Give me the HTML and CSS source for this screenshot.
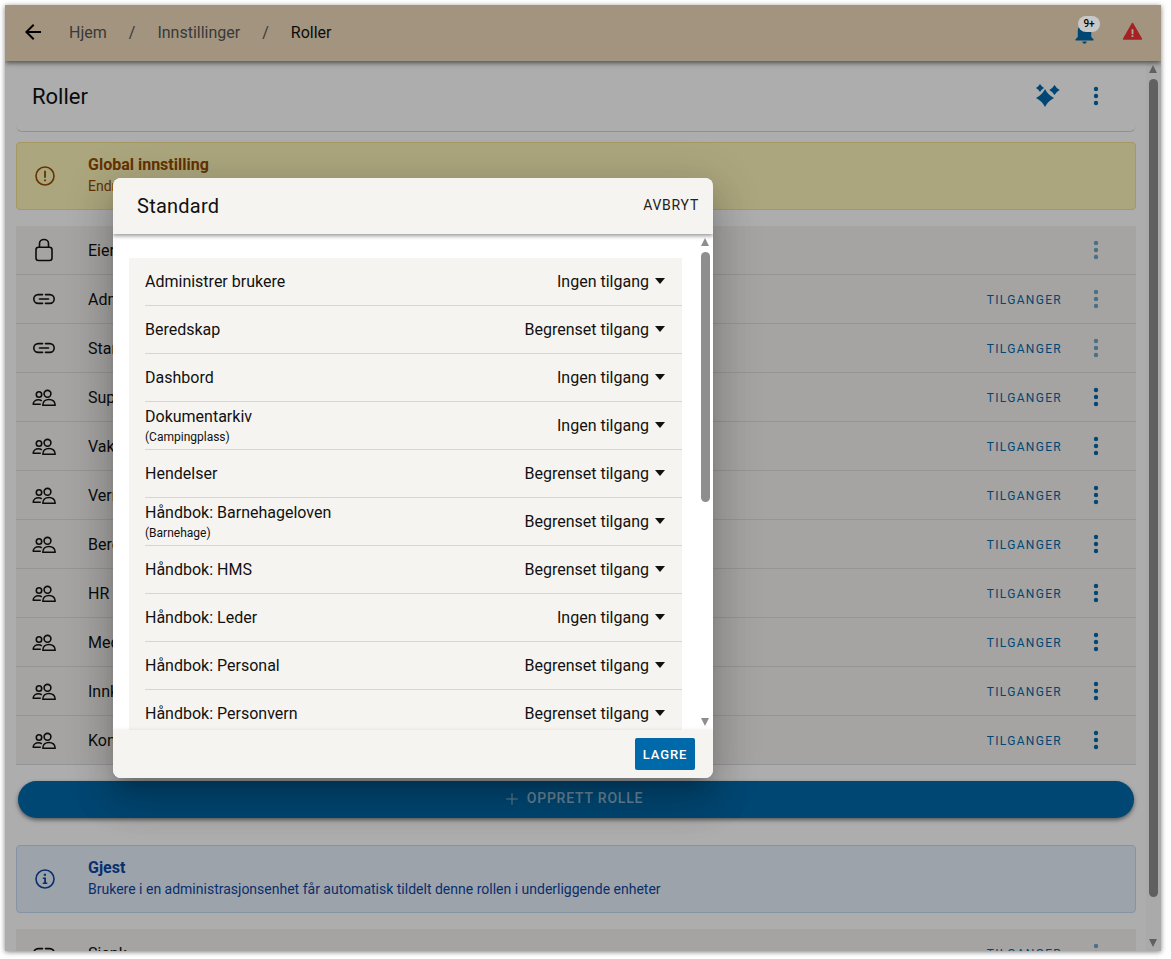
FILE: index.html
```html
<!DOCTYPE html>
<html lang="no">
<head>
<meta charset="utf-8">
<title>Roller</title>
<link rel="stylesheet" href="styles.css">
</head>
<body>
<svg class="defs" width="0" height="0" aria-hidden="true">
  <symbol id="i-dots" viewBox="0 0 24 24"><circle cx="12" cy="5" r="2.2"/><circle cx="12" cy="12" r="2.2"/><circle cx="12" cy="19" r="2.2"/></symbol>
  <symbol id="i-link" viewBox="0 0 24 24"><path fill="none" stroke="currentColor" stroke-width="1.6" stroke-linecap="round" d="M10.500 7.600H6.200a4.400 4.400 0 0 0 0 8.800h4.300M13.500 7.600h4.300a4.400 4.400 0 0 1 0 8.800h-4.300M7.500 12h9"/></symbol>
  <symbol id="i-group" viewBox="0 0 24 24"><g fill="none" stroke="currentColor" stroke-width="1.6" stroke-linejoin="round"><circle cx="15.500" cy="8.800" r="3.400"/><circle cx="7" cy="9.500" r="2.700"/><path d="M10.800 20.300h12.400c0-3.800-2.800-5.800-6.200-5.800s-6.200 2-6.200 5.800z"/><path d="M8.800 19.300H1.200c0-2.800 2.400-4.500 5.300-4.500 1.300 0 2.400.4 3.300 1"/></g></symbol>
  <symbol id="i-lock" viewBox="0 0 24 24"><path fill="none" stroke="currentColor" stroke-width="1.600" d="M6.500 9.300h11a2.500 2.500 0 0 1 2.500 2.500V20a2.500 2.500 0 0 1-2.500 2.500h-11A2.500 2.500 0 0 1 4 20v-8.200a2.500 2.500 0 0 1 2.500-2.500zM7.500 9.300V5.500a4.500 4 0 0 1 9 0v3.800"/></symbol>
  <symbol id="i-caret" viewBox="0 0 10 6"><path d="M0 0h10L5 6z"/></symbol>
</svg>

<div class="window">
  <header class="topbar">
    <svg class="back" viewBox="0 0 24 24"><path d="M20 11H7.830l5.590-5.590L12 4l-8 8 8 8 1.410-1.410L7.830 13H20z"/></svg>
    <nav class="crumbs">
      <span class="crumb">Hjem</span><span class="sep">/</span>
      <span class="crumb">Innstillinger</span><span class="sep">/</span>
      <span class="crumb current">Roller</span>
    </nav>
    <div class="top-actions">
      <div class="bell">
        <svg viewBox="0 0 24 24"><path d="M12 22c1.100 0 2-.9 2-2h-4c0 1.100.9 2 2 2zm6-6v-5c0-3.070-1.630-5.640-4.500-6.320V4c0-.83-.67-1.500-1.500-1.500s-1.500.67-1.500 1.500v.68C7.640 5.360 6 7.920 6 11v5l-2 2v1h16v-1l-2-2z"/></svg>
        <span class="badge">9+</span>
      </div>
      <svg class="warn" viewBox="0 0 24 24"><path class="warn-bg" d="M2 20.500h20L12 3z"/><path class="warn-fg" d="M11 9.500h2v5.500h-2zM11 16.300h2v2h-2z"/></svg>
    </div>
  </header>

  <div class="below">
    <main class="page">
      <section class="title-card">
        <h1>Roller</h1>
        <div class="title-actions">
          <svg class="sparkle" viewBox="0 0 24 24"><path d="M9 5Q12 11 18 14 12 17 9 23 6 17 0 14 6 11 9 5zM18.500 1Q20.300 4.200 23.700 6 20.300 7.800 18.500 11 16.700 7.800 13.300 6 16.700 4.200 18.500 1zM4 0Q5.400 2.600 8 4 5.400 5.400 4 8 2.600 5.400 0 4 2.600 2.600 4 0z"/></svg>
          <svg class="dots"><use href="#i-dots"/></svg>
        </div>
      </section>

      <section class="alert warn-alert">
        <svg class="alert-icon" viewBox="0 0 24 24"><circle cx="12" cy="12" r="9" fill="none" stroke="currentColor" stroke-width="1.600"/><path d="M11.100 6.800h1.800v7h-1.800zM11.100 15.400h1.800v1.800h-1.800z"/></svg>
        <div class="alert-text">
          <strong>Global innstilling</strong>
          <span>Endringer i denne rollen gjelder for alle enheter</span>
        </div>
      </section>

      <section class="list">
        <div class="row"><svg class="row-icon"><use href="#i-lock"/></svg><span class="row-name">Eier</span><svg class="dots muted"><use href="#i-dots"/></svg></div>
        <div class="row"><svg class="row-icon"><use href="#i-link"/></svg><span class="row-name">Administrator</span><span class="access">TILGANGER</span><svg class="dots muted"><use href="#i-dots"/></svg></div>
        <div class="row"><svg class="row-icon"><use href="#i-link"/></svg><span class="row-name">Standard</span><span class="access">TILGANGER</span><svg class="dots muted"><use href="#i-dots"/></svg></div>
        <div class="row"><svg class="row-icon"><use href="#i-group"/></svg><span class="row-name">Superbruker</span><span class="access">TILGANGER</span><svg class="dots"><use href="#i-dots"/></svg></div>
        <div class="row"><svg class="row-icon"><use href="#i-group"/></svg><span class="row-name">Vakt</span><span class="access">TILGANGER</span><svg class="dots"><use href="#i-dots"/></svg></div>
        <div class="row"><svg class="row-icon"><use href="#i-group"/></svg><span class="row-name">Verneombud</span><span class="access">TILGANGER</span><svg class="dots"><use href="#i-dots"/></svg></div>
        <div class="row"><svg class="row-icon"><use href="#i-group"/></svg><span class="row-name">Beredskap</span><span class="access">TILGANGER</span><svg class="dots"><use href="#i-dots"/></svg></div>
        <div class="row"><svg class="row-icon"><use href="#i-group"/></svg><span class="row-name">HR</span><span class="access">TILGANGER</span><svg class="dots"><use href="#i-dots"/></svg></div>
        <div class="row"><svg class="row-icon"><use href="#i-group"/></svg><span class="row-name">Medarbeider</span><span class="access">TILGANGER</span><svg class="dots"><use href="#i-dots"/></svg></div>
        <div class="row"><svg class="row-icon"><use href="#i-group"/></svg><span class="row-name">Innkjøp</span><span class="access">TILGANGER</span><svg class="dots"><use href="#i-dots"/></svg></div>
        <div class="row"><svg class="row-icon"><use href="#i-group"/></svg><span class="row-name">Kontakt</span><span class="access">TILGANGER</span><svg class="dots"><use href="#i-dots"/></svg></div>
      </section>

      <button class="create"><svg viewBox="0 0 24 24"><path d="M19 12.600h-6.400V19h-1.200v-6.400H5v-1.200h6.400V5h1.200v6.400H19z"/></svg>OPPRETT ROLLE</button>

      <section class="alert info-alert">
        <svg class="alert-icon" viewBox="0 0 24 24"><circle cx="12" cy="12" r="9" fill="none" stroke="currentColor" stroke-width="1.600"/><path d="M10.800 6.800h2.200v2h-2.200zM9.800 10.400h3.200v5.200h1.300v1.500H9.800v-1.500h1.400v-3.700H9.800z"/></svg>
        <div class="alert-text">
          <strong>Gjest</strong>
          <span>Brukere i en administrasjonsenhet får automatisk tildelt denne rollen i underliggende enheter</span>
        </div>
      </section>

      <section class="list">
        <div class="row"><svg class="row-icon"><use href="#i-link"/></svg><span class="row-name">Sjenk</span><span class="access">TILGANGER</span><svg class="dots muted"><use href="#i-dots"/></svg></div>
      </section>
    </main>
    <div class="page-scrollbar">
      <span class="arrow up"></span>
      <span class="track"><span class="thumb"></span></span>
      <span class="arrow down"></span>
    </div>
  </div>
  <div class="scrim"></div>
</div>

<div class="dialog">
  <header class="dialog-head">
    <h2>Standard</h2>
    <button class="cancel">AVBRYT</button>
  </header>
  <div class="dialog-body">
    <div class="dialog-scroll">
      <ul class="perm-list">
        <li class="perm"><span class="perm-name">Administrer brukere</span><span class="perm-value">Ingen tilgang<svg class="caret"><use href="#i-caret"/></svg></span></li>
        <li class="perm"><span class="perm-name">Beredskap</span><span class="perm-value">Begrenset tilgang<svg class="caret"><use href="#i-caret"/></svg></span></li>
        <li class="perm"><span class="perm-name">Dashbord</span><span class="perm-value">Ingen tilgang<svg class="caret"><use href="#i-caret"/></svg></span></li>
        <li class="perm"><span class="perm-name">Dokumentarkiv<small>(Campingplass)</small></span><span class="perm-value">Ingen tilgang<svg class="caret"><use href="#i-caret"/></svg></span></li>
        <li class="perm"><span class="perm-name">Hendelser</span><span class="perm-value">Begrenset tilgang<svg class="caret"><use href="#i-caret"/></svg></span></li>
        <li class="perm"><span class="perm-name">Håndbok: Barnehageloven<small>(Barnehage)</small></span><span class="perm-value">Begrenset tilgang<svg class="caret"><use href="#i-caret"/></svg></span></li>
        <li class="perm"><span class="perm-name">Håndbok: HMS</span><span class="perm-value">Begrenset tilgang<svg class="caret"><use href="#i-caret"/></svg></span></li>
        <li class="perm"><span class="perm-name">Håndbok: Leder</span><span class="perm-value">Ingen tilgang<svg class="caret"><use href="#i-caret"/></svg></span></li>
        <li class="perm"><span class="perm-name">Håndbok: Personal</span><span class="perm-value">Begrenset tilgang<svg class="caret"><use href="#i-caret"/></svg></span></li>
        <li class="perm"><span class="perm-name">Håndbok: Personvern</span><span class="perm-value">Begrenset tilgang<svg class="caret"><use href="#i-caret"/></svg></span></li>
      </ul>
    </div>
    <div class="dialog-scrollbar">
      <span class="arrow up"></span>
      <span class="track"><span class="thumb"></span></span>
      <span class="arrow down"></span>
    </div>
  </div>
  <footer class="dialog-foot"><button class="save">LAGRE</button></footer>
</div>
</body>
</html>
```

FILE: styles.css
```css
* { box-sizing: border-box; }
html, body { margin: 0; height: 100%; overflow: hidden; }
body { background: #fff; font-family: Roboto, "Liberation Sans", sans-serif; color: #111; padding: 5px 10px 8px 5px; }
.defs { position: absolute; }

.window { position: relative; height: 946px; background: #fff; display: flex; flex-direction: column; overflow: hidden; }
body::before { content: ""; position: absolute; left: 5px; top: 5px; width: 1156px; height: 946px; box-shadow: 0 1px 5px 0 rgba(0,0,0,.5); }

.topbar { flex: 0 0 56px; background: #f0dbbc; display: flex; align-items: center; padding: 0 18px 2px 16px; position: relative; box-shadow: 0 2px 5px 0 rgba(0,0,0,.55); }
.back { width: 24px; height: 24px; fill: #000; }
.crumbs { display: flex; align-items: center; margin-left: 24px; font-size: 16px; }
.crumb { color: #555; }
.crumb.current { color: #111; }
.sep { color: #555; margin: 0 22px; }
.top-actions { margin-left: auto; display: flex; align-items: center; gap: 24px; }
.bell { position: relative; width: 27px; height: 27px; margin-top: 1px; }
.bell svg { display: block; width: 27px; height: 27px; fill: #0069aa; }
.badge { position: absolute; z-index: 6; left: 7px; top: -3px; width: 22px; height: 16px; border-radius: 8px; background: #c8c8c8; color: #000; font-size: 10px; font-weight: 500; line-height: 15px; text-align: center; }
.warn { width: 21px; height: 21px; margin-top: -1px; }
.warn-bg { fill: #f53232; stroke: #f53232; stroke-width: 2; stroke-linejoin: round; }
.warn-fg { fill: #fff; }

.below { flex: 1; min-height: 0; display: flex; }
.page { flex: 1; min-width: 0; padding: 0 10px 0 11px; overflow: hidden; }

.title-card { height: 71px; display: flex; align-items: center; justify-content: space-between; padding: 0 16px; border-bottom: 1px solid #d4d4d4; border-radius: 0 0 6px 6px; margin-bottom: 10px; }
.title-card h1 { font-size: 22px; font-weight: 400; margin: 1px 0 0; color: #111; }
.title-actions { display: flex; align-items: center; gap: 24px; margin-right: 12px; }
.sparkle { width: 24px; height: 24px; fill: #0069aa; }
.dots { width: 24px; height: 24px; fill: #0069aa; flex: none; }
.dots.muted { opacity: .55; }

.alert { display: flex; align-items: center; height: 68px; border-radius: 4px; padding: 0 0 0 16px; margin-bottom: 16px; font-size: 14px; }
.alert-icon { width: 24px; height: 24px; flex: none; fill: currentColor; }
.alert-text { margin: 0 0 2px 31px; display: flex; flex-direction: column; gap: 1px; line-height: 20px; }
.alert-text strong { font-size: 16px; font-weight: 700; line-height: 20px; }
.warn-alert { background: #fdf5b8; border: 1px solid #f3e08f; color: #964b00; }
.info-alert { background: #e7f1fc; border: 1px solid #c3daf2; color: #0d47a1; margin-top: 27px; }

.list { background: #f4f2ef; }
.row { height: 49px; display: flex; align-items: center; padding: 0 28px 0 16px; border-bottom: 1px solid #dcdcdc; font-size: 16px; }
.row-icon { width: 24px; height: 24px; fill: #111; color: #111; flex: none; }
.row-name { margin-left: 32px; color: #111; }
.access { margin-left: auto; margin-right: 22px; padding-top: 2px; color: #0069aa; font-size: 12px; font-weight: 400; letter-spacing: 1.300px; }
.row > .dots { margin-left: auto; }
.access + .dots { margin-left: 0; }

.create { display: flex; align-items: center; justify-content: center; gap: 5px; width: 1116px; height: 37px; margin: 16px 2px 0; padding: 0 7px 4px 0; border: 0; border-radius: 19px; background: #0069aa; color: rgba(255,255,255,.6); font-family: inherit; font-size: 14px; font-weight: 500; letter-spacing: .800px; box-shadow: 0 2px 4px rgba(0,0,0,.5); }
.create svg { width: 20px; height: 20px; fill: rgba(255,255,255,.6); margin-top: 2px; }

.page-scrollbar, .dialog-scrollbar { flex: none; display: flex; flex-direction: column; align-items: center; }
.page-scrollbar { width: 15px; background: #fbfbfb; }
.dialog-scrollbar { width: 14px; background: #fff; }
.arrow { flex: none; height: 18px; position: relative; }
.arrow::after { content: ""; position: absolute; left: -5px; width: 0; height: 0; border-left: 4.500px solid transparent; border-right: 4.500px solid transparent; }
.arrow.up::after { top: 4px; border-bottom: 8px solid #8e8e8e; }
.arrow.down::after { top: 6px; border-top: 8px solid #8e8e8e; }
.track { flex: 1; width: 100%; min-height: 0; padding: 0 3px; }
.dialog-scrollbar .track { padding: 0 3px 0 2px; }
.thumb { display: block; width: 100%; background: #8e8e8e; border-radius: 5px; }
.page-scrollbar .thumb { height: 818px; }
.dialog-scrollbar .thumb { height: 250px; }

.scrim { position: absolute; inset: 0; background: rgba(0,0,0,.32); z-index: 5; }

.dialog { position: absolute; left: 113px; top: 178px; width: 600px; height: 600px; background: #fff; border-radius: 8px; display: flex; flex-direction: column; overflow: hidden; z-index: 10; box-shadow: 0 11px 15px -7px rgba(0,0,0,.2), 0 24px 38px 3px rgba(0,0,0,.14), 0 9px 46px 8px rgba(0,0,0,.12); }
.dialog-head { flex: 0 0 56px; display: flex; align-items: center; justify-content: space-between; padding: 0 14px 0 24px; background: #f6f4f0; position: relative; z-index: 1; box-shadow: 0 2px 4px rgba(0,0,0,.4); }
.dialog-head h2 { margin: 0; font-size: 20px; font-weight: 400; letter-spacing: .25px; color: #111; }
.cancel { border: 0; background: none; padding: 0 0 2px; font-family: inherit; font-size: 14px; letter-spacing: .750px; color: #222; }
.dialog-body { flex: 1; min-height: 0; display: flex; }
.dialog-scroll { flex: 1; min-width: 0; padding: 24px 17px 0 16px; overflow: hidden; }
.perm-list { list-style: none; margin: 0; padding: 0; background: #f6f4f0; }
.perm { height: 48px; display: flex; align-items: center; justify-content: space-between; margin: 0; padding: 0 17px 2px 16px; font-size: 16px; color: #111; position: relative; }
.perm + .perm::before { content: ""; position: absolute; left: 16px; right: 0; top: -1px; border-top: 1px solid #d8d6d2; }
.perm-name { display: flex; flex-direction: column; }
.perm-name small { font-size: 12px; line-height: 14px; margin-top: 4px; }
.perm-value { display: flex; align-items: center; }
.caret { width: 10px; height: 6px; margin-left: 6px; fill: #111; }
.dialog-foot { flex: 0 0 48px; background: #f6f4f0; display: flex; align-items: center; justify-content: flex-end; padding: 0 18px; position: relative; box-shadow: 0 -1px 3px rgba(0,0,0,.06); }
.save { width: 60px; height: 32px; border: 0; border-radius: 2px; background: #0069aa; color: #fff; font-family: inherit; font-size: 13px; font-weight: 500; letter-spacing: .900px; padding: 0; }
```
